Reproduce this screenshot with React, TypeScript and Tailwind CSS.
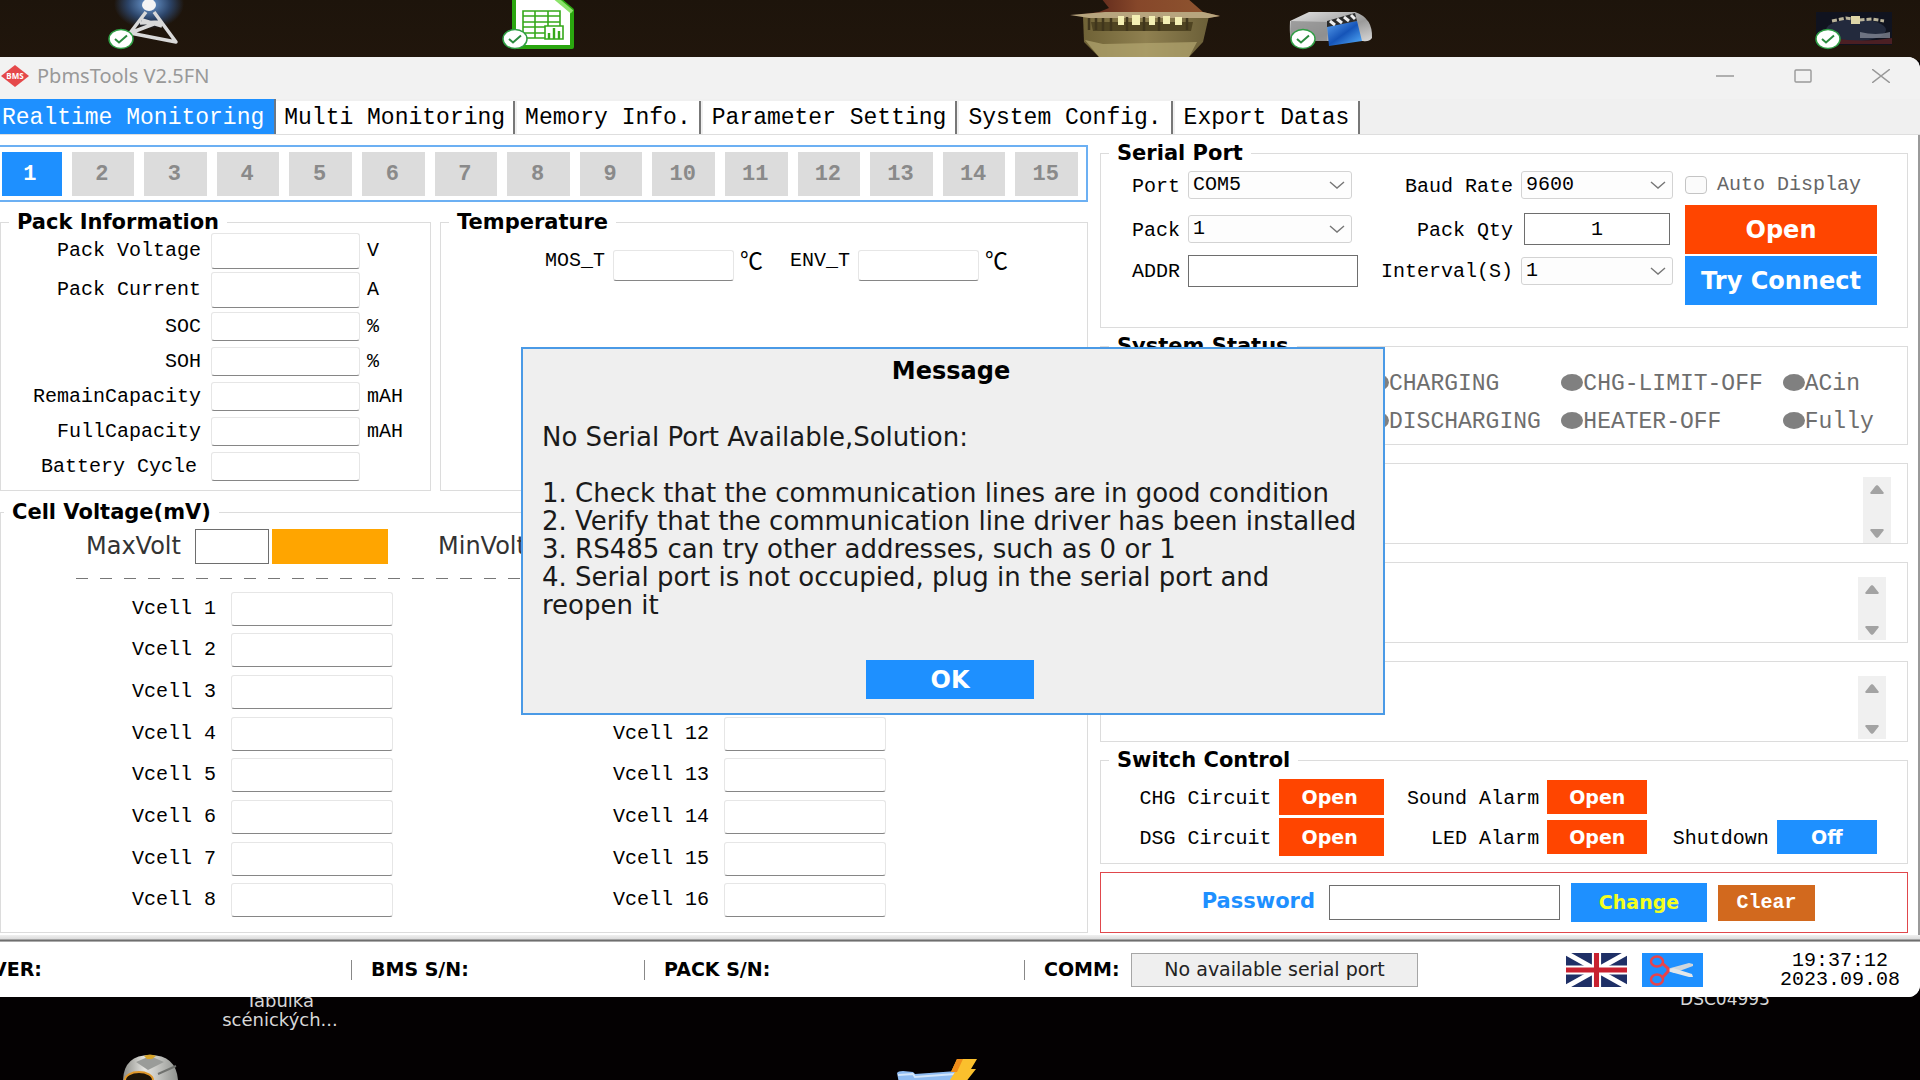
import React from "react";

const tabs = ["Realtime Monitoring", "Multi Monitoring", "Memory Info.", "Parameter Setting", "System Config.", "Export Datas"];

const packRows = [
  { label: "Pack Voltage", unit: "V", tall: true },
  { label: "Pack Current", unit: "A", tall: true },
  { label: "SOC", unit: "%", tall: false },
  { label: "SOH", unit: "%", tall: false },
  { label: "RemainCapacity", unit: "mAH", tall: false },
  { label: "FullCapacity", unit: "mAH", tall: false },
  { label: "Battery Cycle", unit: "", tall: false },
];

const statusLights = ["CHARGING", "CHG-LIMIT-OFF", "ACin", "DISCHARGING", "HEATER-OFF", "Fully"];

const flatInput =
  "min-w-0 rounded-[3px] border border-[#e6e6e6] border-b-[#868686] bg-white px-1 font-['Liberation_Mono',monospace] text-[20px] outline-none";
const boxInput = "min-w-0 border border-[#6e6e6e] bg-white px-1 font-['Liberation_Mono',monospace] text-[20px] outline-none";
const mono20 = "font-['Liberation_Mono',monospace] text-[20px] leading-6 whitespace-pre";
const panel = "min-w-0 border border-[#dcdcdc]";
const legendText = "px-2 text-[21px] font-bold leading-[18px] whitespace-nowrap";

function Select({ id, value }: { id: string; value: string }) {
  return (
    <div className="relative h-7 w-full">
      <select
        id={id}
        defaultValue={value}
        className="h-7 w-full appearance-none rounded-[3px] border border-[#d3d3d3] bg-[#fdfdfd] pl-1 font-['Liberation_Mono',monospace] text-[20px] leading-6 outline-none"
      >
        <option>{value}</option>
      </select>
      <svg className="pointer-events-none absolute right-[7px] top-[10px] h-2 w-4" viewBox="0 0 16 8" fill="none" stroke="#777" strokeWidth="1.4">
        <path d="M1 1 8 7 15 1" />
      </svg>
    </div>
  );
}

function SyncBadge({ x }: { x: number }) {
  return (
    <g transform={`translate(${x} 39)`}>
      <ellipse rx="12" ry="9.5" fill="#fff" stroke="#2f9e44" strokeWidth="1.5" />
      <path d="M-6 0 -2 3.5 6 -3.5" fill="none" stroke="#2b8a3e" strokeWidth="2" />
    </g>
  );
}

function TowerIcon() {
  return (
    <svg className="absolute left-[100px] top-0 h-[57px] w-[90px]" viewBox="0 0 90 57">
      <defs>
        <radialGradient id="glow">
          <stop offset="0" stopColor="#6f9fd8" />
          <stop offset="0.6" stopColor="#2c4468" />
          <stop offset="1" stopColor="#2c4468" stopOpacity="0" />
        </radialGradient>
      </defs>
      <ellipse cx="49" cy="4" rx="35" ry="25" fill="url(#glow)" />
      <path d="M46 12 30 33 76 42 54 12M40 23 59 22 30 33M42 20 62 26" fill="none" stroke="#d9d9d9" strokeWidth="3.5" strokeLinejoin="round" />
      <ellipse cx="49" cy="5" rx="7" ry="6" fill="#f4f4f4" />
      <SyncBadge x={21} />
    </svg>
  );
}

function SheetIcon() {
  return (
    <svg className="absolute left-[495px] top-0 h-[57px] w-[90px]" viewBox="0 0 90 57">
      <path d="M19 -6H58L77 10V47H19Z" fill="#fff" stroke="#2aa60f" strokeWidth="4" strokeLinejoin="round" />
      <path d="M58 -4 77 12" stroke="#8be36a" strokeWidth="4" />
      <path d="M28 11H65V38H28ZM28 16H65M28 22H65M28 27H65M28 33H65M40 11V38M53 11V38" fill="none" stroke="#35a81a" strokeWidth="1.6" />
      <path d="M50 26H68V39H50Z" fill="#fff" stroke="#35a81a" strokeWidth="1.6" />
      <path d="M54 39V33M59 39V28M64 39V31" stroke="#35a81a" strokeWidth="2.4" />
      <SyncBadge x={20} />
    </svg>
  );
}

function CastleArt() {
  return (
    <svg className="absolute left-[1065px] top-0 h-[57px] w-[170px]" viewBox="0 0 170 57">
      <defs>
        <linearGradient id="roof" x1="0" x2="1">
          <stop offset="0" stopColor="#4a1812" />
          <stop offset="0.45" stopColor="#86472a" />
          <stop offset="1" stopColor="#8f5630" />
        </linearGradient>
        <linearGradient id="wall" x1="0" x2="1">
          <stop offset="0" stopColor="#6f6236" />
          <stop offset="0.5" stopColor="#8f8050" />
          <stop offset="1" stopColor="#6b5f38" />
        </linearGradient>
      </defs>
      <path d="M18 16H144L138 42 124 57H34L19 42Z" fill="url(#wall)" />
      <path d="M26 22H128L126 31H28Z" fill="#4f4422" />
      <path d="M36 -2H122L138 12 155 16 142 18 40 13 5 16 34 12 44 8Z" fill="url(#roof)" />
      <path d="M5 15 40 12H138L155 16 144 18H24Z" fill="#b7a57e" />
      <path d="M53 16h6v9h-6zM67 15h8v10h-8zM84 16h6v9h-6zM98 16h7v8h-7zM110 17h7v8h-7z" fill="#f3efb4" />
      <path d="M24 18v12M31 18v12M38 18v13M46 18v13M62 17v14M79 17v14M94 17v14M122 18v12" stroke="#40361c" strokeWidth="2.5" />
      <path d="M20 40 38 44 132 42 124 57H34Z" fill="#b3a671" opacity=".7" />
    </svg>
  );
}

function VideoIcon() {
  return (
    <svg className="absolute left-[1285px] top-0 h-[57px] w-[95px]" viewBox="0 0 95 57">
      <defs>
        <linearGradient id="metal" x1="0" y1="0" x2="1" y2="1">
          <stop offset="0" stopColor="#e4e4e4" />
          <stop offset="0.6" stopColor="#9a9a9a" />
          <stop offset="1" stopColor="#d8d8d8" />
        </linearGradient>
        <linearGradient id="clip" x1="0" y1="0" x2="1" y2="1">
          <stop offset="0" stopColor="#5ca2f0" />
          <stop offset="0.5" stopColor="#1554b8" />
          <stop offset="1" stopColor="#59b4ff" />
        </linearGradient>
      </defs>
      <path d="M24 12H70Q88 18 87 38 84 42 78 41H8Q4 41 5 21Z" fill="url(#metal)" />
      <path d="M6 21 42 22V41H8Q4 41 6 21Z" fill="#8c8c8c" opacity=".75" />
      <path d="M42 26 72 21 77 41 44 46Z" fill="url(#clip)" />
      <path d="M42 21 70 13 72 21 42 27Z" fill="#2a2a2a" />
      <path d="M45 21l5 4M52 19l5 4M59 17l5 4M66 15l4 4" stroke="#eee" strokeWidth="3" />
      <SyncBadge x={18} />
    </svg>
  );
}

function PhotoIcon() {
  return (
    <svg className="absolute left-[1810px] top-0 h-[57px] w-[90px]" viewBox="0 0 90 57">
      <rect x="6" y="12" width="76" height="33" fill="#10131f" />
      <ellipse cx="46" cy="30" rx="30" ry="11" fill="#232a3d" />
      <path d="M22 21 36 18 48 20 62 19 74 21" stroke="#b9b39a" strokeWidth="3" fill="none" strokeDasharray="5 2" />
      <rect x="41" y="16" width="9" height="8" fill="#ded6a8" />
      <path d="M50 32Q66 36 80 32V38H50Z" fill="#8f93a0" opacity=".7" />
      <path d="M24 38Q50 43 82 38V44H24Z" fill="#4b1f24" />
      <SyncBadge x={18} />
    </svg>
  );
}

function WebcamIcon() {
  return (
    <svg className="absolute bottom-0 left-[118px] h-[26px] w-[66px]" viewBox="0 0 66 26">
      <defs>
        <linearGradient id="cam" x1="0" x2="1">
          <stop offset="0" stopColor="#8d8d88" />
          <stop offset="0.4" stopColor="#e6e6e2" />
          <stop offset="1" stopColor="#8f918e" />
        </linearGradient>
      </defs>
      <path d="M5 26Q6 1 32 1T60 26Z" fill="url(#cam)" />
      <path d="M18 8 30 16 46 8 32 2Z" fill="#9a9c99" />
      <path d="M26 2Q32 -1 38 2L34 5H29Z" fill="#d7a52b" />
      <ellipse cx="21" cy="26" rx="14" ry="8" fill="#1c1408" stroke="#e0982a" strokeWidth="2" />
      <path d="M40 20 58 12" stroke="#6f716e" strokeWidth="2" />
    </svg>
  );
}

function FolderBoltIcon() {
  return (
    <svg className="absolute bottom-0 left-[895px] h-[21px] w-[86px]" viewBox="0 0 86 21">
      <path d="M2 14Q3 12 8 12L18 13 20 15 62 12V24H4Z" fill="#8fbcf2" />
      <path d="M3 16 18 15 20 18 60 15" stroke="#d3e6fb" strokeWidth="2" fill="none" />
      <path d="M62 0H82L76 10H81L70 24H53L60 13H56Z" fill="#fbc02d" />
      <path d="M62 0H68L62 13H56Z" fill="#f08c1a" />
    </svg>
  );
}

function ArrowStrip({ className, name }: { className: string; name: string }) {
  return (
    <div className={className}>
      <button aria-label={`Scroll ${name} up`} className="flex h-5 w-full items-center justify-center">
        <svg viewBox="0 0 14 9" className="h-[9px] w-3.5" fill="#a3a3a3"><path d="M5.5 1 7 0 8.500 1 14 8 13 9H1L0 8Z" /></svg>
      </button>
      <button aria-label={`Scroll ${name} down`} className="flex h-5 w-full items-center justify-center">
        <svg viewBox="0 0 14 9" className="h-[9px] w-3.5" fill="#a3a3a3"><path d="M5.500 8 7 9 8.500 8 14 1 13 0H1L0 1Z" /></svg>
      </button>
    </div>
  );
}

function TitleBar() {
  return (
    <header className="flex h-[42px] items-center bg-[#f2f2f2] pb-1 pl-px">
      <svg viewBox="0 0 28 22" className="h-[22px] w-7">
        <path d="M14 0 28 11 14 22 0 11Z" fill="#e5484a" />
        <text x="14" y="14" textAnchor="middle" fontFamily="Noto Sans" fontWeight="700" fontSize="8" fill="#fff">BMS</text>
      </svg>
      <h1 className="ml-2 flex-1 font-['Noto_Sans',sans-serif] text-[20px] leading-6 text-[#999]">PbmsTools V2.5FN</h1>
      <div className="flex text-[#999]">
        <button aria-label="Minimize" className="flex h-8 w-[78px] items-center justify-center">
          <svg viewBox="0 0 18 14" className="h-3.5 w-[18px]" stroke="currentColor" strokeWidth="1.400"><path d="M0 7H18" /></svg>
        </button>
        <button aria-label="Maximize" className="flex h-8 w-[78px] items-center justify-center">
          <svg viewBox="0 0 18 14" className="h-3.5 w-[18px]" fill="none" stroke="currentColor" strokeWidth="1.400"><rect x="1" y="1" width="16" height="12" rx="1" /></svg>
        </button>
        <button aria-label="Close" className="flex h-8 w-[78px] items-center justify-center">
          <svg viewBox="0 0 18 14" className="h-3.5 w-[18px]" stroke="currentColor" strokeWidth="1.400"><path d="M0 0 18 14M18 0 0 14" /></svg>
        </button>
      </div>
    </header>
  );
}

function TabBar() {
  return (
    <nav className="flex h-9 items-end border-b border-[#dedede] bg-[#f0f0f0] font-['Liberation_Mono',monospace] text-[23px]">
      {tabs.map((t, i) => (
        <button
          key={t}
          className={
            i === 0
              ? "h-full border-r-2 border-[#6b7785] bg-[#1e90ff] pl-0.5 pr-2.5 pt-0.5 text-white"
              : i < 3
                ? "mr-0.5 h-[33px] border-r-2 border-[#777] bg-white px-2 text-black"
                : "mr-0.5 h-[33px] border-r-2 border-[#777] bg-white px-[9px] text-black"
          }
        >
          {t}
        </button>
      ))}
    </nav>
  );
}

function Pager() {
  return (
    <div className="grid h-[57px] grid-cols-[59fr_repeat(14,62fr)] items-center gap-2.5 border-y-2 border-r-2 border-[#6cb0f3] pl-0.5 pr-2">
      {Array.from({ length: 15 }, (_, i) => (
        <button
          key={i}
          className={
            i === 0
              ? "h-11 bg-[#1e90ff] pr-1 pt-0.5 font-['Liberation_Mono',monospace] text-[22px] font-bold text-white"
              : "h-11 bg-[#dcdcdc] pr-0.5 pt-0.5 font-['Liberation_Mono',monospace] text-[22px] font-bold text-[#8a8a8a]"
          }
        >
          {i + 1}
        </button>
      ))}
    </div>
  );
}

function PackInformation() {
  return (
    <fieldset className={panel}>
      <legend className={`${legendText} ml-2`}>Pack Information</legend>
      {packRows.map((r) => (
        <div key={r.label} className={r.tall ? "flex h-[39px] items-center" : "flex h-[35px] items-center"}>
          <label htmlFor={r.label} className={r.unit ? `${mono20} w-[200px] text-right` : `${mono20} w-[200px] pr-1 text-right`}>{r.label}</label>
          <input id={r.label} className={r.tall ? `${flatInput} ml-2.5 h-9 w-[149px]` : `${flatInput} ml-2.5 h-[29px] w-[149px]`} />
          <span className={`${mono20} ml-[7px]`}>{r.unit}</span>
        </div>
      ))}
    </fieldset>
  );
}

function Temperature() {
  return (
    <fieldset className={panel}>
      <legend className={`${legendText} ml-2`}>Temperature</legend>
      <div className="flex items-start pl-[104px] pt-[18px]">
        {["MOS_T", "ENV_T"].map((t) => (
          <div key={t} className="mr-[27px] flex items-start">
            <label htmlFor={t} className={mono20}>{t}</label>
            <input id={t} className={`${flatInput} ml-2 mt-px h-[31px] w-[121px]`} />
            <span className="ml-1.5 font-['Noto_Sans_CJK_SC',sans-serif] text-[23px] leading-5">℃</span>
          </div>
        ))}
      </div>
    </fieldset>
  );
}

function CellVoltage() {
  return (
    <fieldset className={`${panel} flex flex-1 flex-col`}>
      <legend className={`${legendText} ml-[3px]`}>Cell Voltage(mV)</legend>
      <div className="flex h-full flex-col">
        <div className="mt-[7px] flex h-9 items-center pl-[85px] text-[24px] text-[#333]">
          <label htmlFor="maxv" className="w-[98px]">MaxVolt</label>
          <input id="maxv" className={`${boxInput} ml-[11px] h-[35px] w-[74px]`} />
          <output className="ml-[3px] h-[35px] w-[116px] bg-[#ffa500]" />
          <label htmlFor="minv" className="ml-[50px] w-[98px]">MinVolt</label>
          <input id="minv" className={`${boxInput} ml-2 h-[35px] w-[74px]`} />
          <output className="ml-1 h-[35px] w-[116px] bg-[#1e90ff]" />
        </div>
        <div className="ml-[75px] mr-[75px] mt-3.5 h-px bg-[repeating-linear-gradient(to_right,#777_0_12px,transparent_12px_24px)]" />
        <div className="mb-[11px] mt-[9px] grid flex-1 grid-flow-col grid-cols-[493fr_593fr] grid-rows-8">
          {Array.from({ length: 16 }, (_, i) => (
            <div key={i} className="flex items-center">
              <label htmlFor={`vcell${i + 1}`} className={`${mono20} w-[215px] text-right`}>Vcell {i + 1}</label>
              <input id={`vcell${i + 1}`} className={`${flatInput} ml-[15px] h-[34px] w-[162px]`} />
            </div>
          ))}
        </div>
      </div>
    </fieldset>
  );
}

function SerialPort() {
  const label = `${mono20} pt-[3px] text-right`;
  return (
    <fieldset className={`${panel} h-[184px]`}>
      <legend className={`${legendText} ml-2`}>Serial Port</legend>
      <div className="flex pr-[30px]">
        <div className="grid flex-1 grid-cols-[79px_170fr_147fr_152fr] grid-rows-[46px_42px_41px] items-center gap-x-2">
          <label htmlFor="port" className={label}>Port</label>
          <div className="pr-1.5"><Select id="port" value="COM5" /></div>
          <label htmlFor="baud" className={label}>Baud Rate</label>
          <Select id="baud" value="9600" />
          <label htmlFor="pack" className={label}>Pack</label>
          <div className="pr-1.5"><Select id="pack" value="1" /></div>
          <label htmlFor="qty" className={label}>Pack Qty</label>
          <div className="flex px-[3px]"><input id="qty" defaultValue="1" className={`${boxInput} h-8 w-full text-center`} /></div>
          <label htmlFor="addr" className={label}>ADDR</label>
          <input id="addr" className={`${boxInput} h-8`} />
          <label htmlFor="interval" className={label}>Interval(S)</label>
          <Select id="interval" value="1" />
        </div>
        <div className="ml-3 flex w-48 flex-col text-[24px] font-bold text-white">
          <label className="flex h-[43px] items-center pt-[3px] text-[#666]">
            <input type="checkbox" className="h-[18px] w-[22px] appearance-none rounded-[4px] border border-[#c4c4c4] bg-[#fbfbfb]" />
            <span className="ml-2.5 font-['Liberation_Mono',monospace] text-[20px] font-normal">Auto Display</span>
          </label>
          <button className="h-[49px] bg-[#ff4500]">Open</button>
          <button className="mt-0.5 h-[49px] whitespace-nowrap bg-[#1e90ff]">Try Connect</button>
        </div>
      </div>
    </fieldset>
  );
}

function SystemStatus() {
  return (
    <fieldset className={`${panel} mt-[9px] h-[108px]`}>
      <legend className={`${legendText} ml-2`}>System Status</legend>
      <ul className="ml-[33%] mt-2 grid grid-cols-[194fr_221fr_124fr] text-[#6e6e6e]">
        {statusLights.map((s) => (
          <li key={s} className="flex h-[38px] items-center whitespace-nowrap font-['Liberation_Mono',monospace] text-[23px]">
            <span className="h-[17px] w-[22px] rounded-[50%] bg-[#808080]" />
            <span className="pt-1">{s}</span>
          </li>
        ))}
      </ul>
    </fieldset>
  );
}

function SwitchControl() {
  const label = `${mono20} pt-[3px] text-right`;
  const small = "h-[34px] bg-[#ff4500] text-[19px] font-bold text-white";
  return (
    <fieldset className={`${panel} mt-[9px] h-[113px]`}>
      <legend className={`${legendText} ml-2`}>Switch Control</legend>
      <div className="grid grid-cols-[170fr_104fr_147fr_100fr_113fr_100fr] grid-rows-[40px_40px] items-center gap-x-2 pr-[30px] pt-2">
        <span className={label}>CHG Circuit</span>
        <button aria-label="CHG Circuit Open" className="h-9 bg-[#ff4500] pr-1 text-[19px] font-bold text-white">Open</button>
        <span className={label}>Sound Alarm</span>
        <button aria-label="Sound Alarm Open" className={small}>Open</button>
        <span className={`${label} col-start-1`}>DSG Circuit</span>
        <button aria-label="DSG Circuit Open" className="h-[38px] bg-[#ff4500] pr-1 text-[19px] font-bold text-white">Open</button>
        <span className={label}>LED Alarm</span>
        <button aria-label="LED Alarm Open" className={small}>Open</button>
        <span className={label}>Shutdown</span>
        <button aria-label="Shutdown Off" className="h-[34px] bg-[#1e90ff] text-[19px] font-bold text-white">Off</button>
      </div>
    </fieldset>
  );
}

function PasswordBar() {
  return (
    <form className="mt-2 flex h-[61px] items-center justify-end border border-[#e0484c] pr-[92px]" onSubmit={(e) => e.preventDefault()}>
      <label htmlFor="pwd" className="pb-0.5 text-[21px] font-bold text-[#1e90ff]">Password</label>
      <input id="pwd" type="password" className={`${boxInput} ml-3.5 h-[35px] w-[231px]`} />
      <button className="ml-[11px] h-[39px] w-[136px] bg-[#1e90ff] text-[19px] font-bold text-[#f4ff1e]">Change</button>
      <button className="ml-[11px] h-9 w-[97px] bg-[#d2691e] font-['Liberation_Mono',monospace] text-[20px] font-bold text-white">Clear</button>
    </form>
  );
}

function StatusBar() {
  return (
    <footer className="grid h-[55px] grid-cols-[351fr_1px_292fr_1px_379fr_1px_895fr] items-center bg-white text-[19px] font-bold">
      <div className="min-w-0"><span className="-ml-2">VER:</span></div>
      <div className="h-5 bg-[#888]" />
      <div className="min-w-0 pl-[19px]">BMS S/N:</div>
      <div className="h-5 bg-[#888]" />
      <div className="min-w-0 pl-[19px]">PACK S/N:</div>
      <div className="h-5 bg-[#888]" />
      <div className="flex min-w-0 items-center pl-[19px] pr-5">
        <span className="w-[87px]">COMM:</span>
        <button className="h-[34px] w-[287px] border border-[#a6a6a6] bg-[#efefef] text-[19px] font-normal text-[#222]">No available serial port</button>
        <div className="flex-1" />
        <button aria-label="Language: English">
          <svg viewBox="0 0 60 34" className="h-[34px] w-[61px]" preserveAspectRatio="none">
            <rect width="60" height="34" fill="#1e2f66" />
            <path d="M0 0 60 34M60 0 0 34" stroke="#fff" strokeWidth="5" />
            <path d="M30 0V34M0 17H60" stroke="#fff" strokeWidth="9" />
            <path d="M30 0V34M0 17H60" stroke="#c8202f" strokeWidth="5" />
          </svg>
        </button>
        <button aria-label="Screenshot" className="ml-[15px]">
          <svg viewBox="0 0 61 34" className="h-[34px] w-[61px]" fill="none">
            <rect width="61" height="34" fill="#1e90ff" />
            <path d="M25 16 47 10 51 11V13L32 20Z" fill="#cfd6dc" />
            <path d="M25 18 47 24 51 24 50 21 31 15Z" fill="#e3e7ea" />
            <ellipse cx="15" cy="8.500" rx="6" ry="5" stroke="#e8434b" strokeWidth="2.500" />
            <ellipse cx="15" cy="26.500" rx="6" ry="5" stroke="#e8434b" strokeWidth="2.500" />
            <path d="M20 10 26 15.500V18.500L20 25" stroke="#e8434b" strokeWidth="3" />
          </svg>
        </button>
        <div className="ml-[77px] w-[120px] text-center font-['Liberation_Mono',monospace] text-[20px] font-normal leading-[19px]">
          <div>19:37:12</div>
          <div>2023.09.08</div>
        </div>
      </div>
    </footer>
  );
}

function MessageDialog() {
  return (
    <div role="dialog" aria-labelledby="msg-title" className="absolute left-[521px] top-[290px] flex h-[368px] w-[864px] flex-col items-center border-2 border-[#4a9ae6] bg-[#efefef]">
      <h2 id="msg-title" className="mr-1 mt-2 text-[24px] font-bold leading-7">Message</h2>
      <div className="mt-[38px] w-full whitespace-pre pl-[19px] text-[26px] leading-7 text-[#1a1a1a]">
        <p>No Serial Port Available,Solution:</p>
        <ol className="mt-7">
          <li>1. Check that the communication lines are in good condition</li>
          <li>2. Verify that the communication line driver has been installed</li>
          <li>3. RS485 can try other addresses, such as 0 or 1</li>
          <li>{"4. Serial port is not occupied, plug in the serial port and\nreopen it"}</li>
        </ol>
      </div>
      <button className="mr-[6px] mt-[41px] h-[39px] w-[168px] bg-[#1e90ff] text-[24px] font-bold text-white">OK</button>
    </div>
  );
}

export default function App() {
  return (
    <div className="relative flex min-h-screen flex-col overflow-hidden bg-[linear-gradient(to_bottom,#1d140b_0,#21160c_60px,#040102_61px,#040102_100%)] pb-[83px] pt-[57px] font-['DejaVu_Sans',sans-serif] text-black">
      <TowerIcon />
      <SheetIcon />
      <CastleArt />
      <VideoIcon />
      <PhotoIcon />
      <WebcamIcon />
      <FolderBoltIcon />
      <div className="absolute bottom-[51px] left-[200px] w-40 text-center text-[18px] leading-[19px] text-[#d8d8d8]">Tabulka<br />scénických...</div>
      <div className="absolute bottom-[71px] left-[1665px] w-[120px] text-center text-[17px] leading-[19px] text-[#d8d8d8]">DSC04993</div>

      <div className="relative flex flex-1 flex-col overflow-hidden rounded-r-xl bg-white">
        <TitleBar />
        <TabBar />
        <main className="grid flex-1 grid-cols-[minmax(0,1088fr)_minmax(0,808fr)] gap-x-3 border-r-2 border-[#9a9a9a] pb-0.5 pr-2.5">
          <div className="flex flex-col pt-2.5">
            <Pager />
            <div className="mt-[11px] grid h-[278px] grid-cols-[431fr_648fr] gap-x-[9px]">
              <PackInformation />
              <Temperature />
            </div>
            <div className="mt-3 flex flex-1">
              <CellVoltage />
            </div>
          </div>
          <div className="flex flex-col pt-[9px]">
            <SerialPort />
            <SystemStatus />
            <section aria-label="Protection status" className={`${panel} mt-[18px] flex h-[81px] items-end justify-end pr-4`}>
              <ArrowStrip name="protection status" className="flex h-[66px] w-7 flex-col justify-between bg-[#f0f0f0] pt-0.5" />
            </section>
            <section aria-label="Alarm status" className={`${panel} mt-[18px] flex h-[81px] items-end justify-end pb-0.5 pr-[21px]`}>
              <ArrowStrip name="alarm status" className="flex h-[63px] w-7 flex-col justify-between bg-[#f0f0f0] pt-0.5" />
            </section>
            <section aria-label="Fault status" className={`${panel} mt-[18px] flex h-[81px] items-end justify-end pb-0.5 pr-[21px]`}>
              <ArrowStrip name="fault status" className="flex h-[63px] w-7 flex-col justify-between bg-[#f0f0f0] pt-0.5" />
            </section>
            <SwitchControl />
            <PasswordBar />
          </div>
        </main>
        <div className="h-[7px] bg-[linear-gradient(to_bottom,#f0f0f0_0,#dcdcdc_4px,#6e6e6e_5px,#6e6e6e_6px,#e8e8e8_7px)]" />
        <StatusBar />
        <MessageDialog />
      </div>
    </div>
  );
}
